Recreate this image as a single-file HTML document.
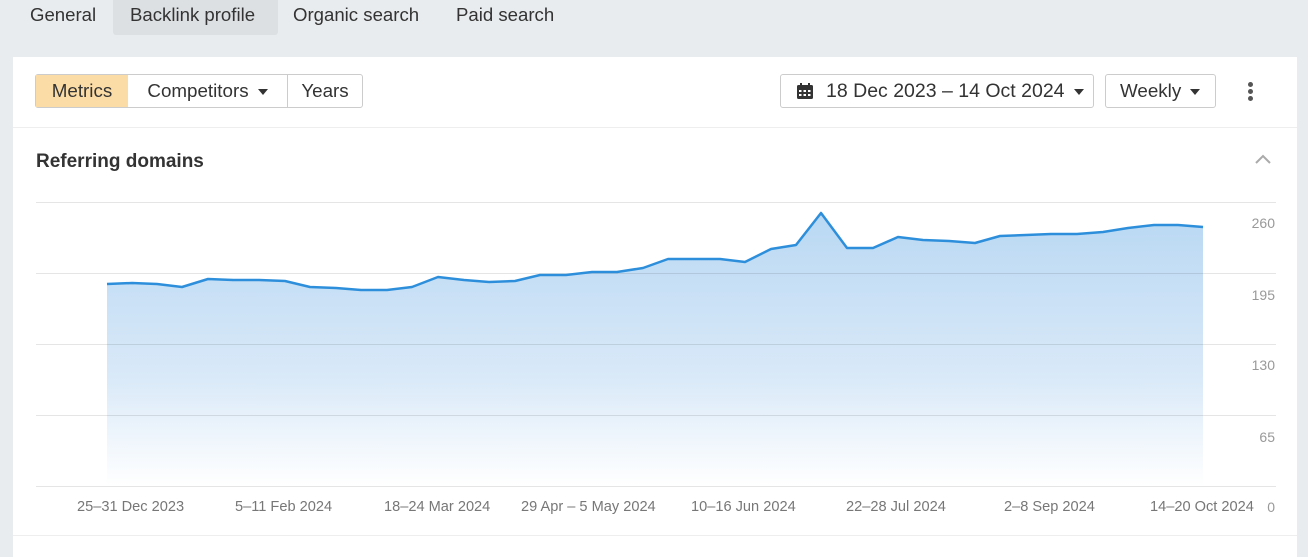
<!DOCTYPE html>
<html><head><style>
body{margin:0;width:1308px;height:552px;background:#e9ecee;font-family:"Liberation Sans",sans-serif;position:relative;overflow:hidden;color:#333}
.tab{position:absolute;top:0;height:34px;line-height:30px;font-size:18.6px;color:#333}
.card{position:absolute;left:13px;top:57px;width:1284px;height:500px;background:#fff}
.btn{position:absolute;top:74px;height:34px;border:1px solid #ccc;box-sizing:border-box;border-radius:3px;font-size:18.8px;line-height:32px;color:#333;background:#fff;white-space:nowrap}
.tri{display:inline-block;width:0;height:0;border-left:5px solid transparent;border-right:5px solid transparent;border-top:6px solid #333;vertical-align:middle;margin-left:9px}
.yl{position:absolute;font-size:14px;color:#999;right:33px}
.xl{position:absolute;top:499px;font-size:14.6px;color:#777;white-space:nowrap}
</style></head><body>
<div class="tab" style="left:30px">General</div>
<div class="tab" style="left:113px;width:165px;height:35px;background:#dde0e3;border-radius:0 0 3px 3px"><span style="margin-left:17px">Backlink profile</span></div>
<div class="tab" style="left:293px">Organic search</div>
<div class="tab" style="left:456px">Paid search</div>
<div class="card"></div>
<div class="btn" style="left:35px;width:328px;padding:0"></div>
<div style="position:absolute;left:36px;top:75px;width:92px;height:32px;background:#fcdca6;font-size:18.8px;line-height:32px;text-align:center">Metrics</div>
<div style="position:absolute;left:128px;top:75px;width:159px;height:32px;border-right:1px solid #ccc;font-size:18.8px;line-height:32px;text-align:center;white-space:nowrap">Competitors<span class="tri"></span></div>
<div style="position:absolute;left:288px;top:75px;width:74px;height:32px;font-size:18.8px;line-height:32px;text-align:center">Years</div>
<div class="btn" style="left:780px;width:314px;padding-left:45px;font-size:19.5px">18 Dec 2023 – 14 Oct 2024<span class="tri"></span></div>
<svg style="position:absolute;left:796px;top:83px" width="18" height="17" viewBox="0 0 18 17"><rect x="1" y="2" width="16" height="14" rx="1.5" fill="#333"/><rect x="4" y="0" width="2" height="4" fill="#333"/><rect x="12" y="0" width="2" height="4" fill="#333"/><g fill="#fff"><rect x="3" y="7" width="2.5" height="2"/><rect x="7.5" y="7" width="2.5" height="2"/><rect x="12" y="7" width="2.5" height="2"/><rect x="3" y="11" width="2.5" height="2"/><rect x="7.5" y="11" width="2.5" height="2"/><rect x="12" y="11" width="2.5" height="2"/></g></svg>
<div class="btn" style="left:1105px;width:111px;padding-left:14px">Weekly<span class="tri"></span></div>
<div style="position:absolute;left:1248px;top:82px;width:5px">
<div style="width:5px;height:5px;border-radius:50%;background:#555;margin-bottom:2px"></div><div style="width:5px;height:5px;border-radius:50%;background:#555;margin-bottom:2px"></div><div style="width:5px;height:5px;border-radius:50%;background:#555"></div></div>
<div style="position:absolute;left:13px;top:127px;width:1284px;height:1px;background:#eee"></div>
<div style="position:absolute;left:36px;top:151px;font-size:19px;font-weight:bold;color:#333">Referring domains</div>
<svg style="position:absolute;left:1254px;top:153px" width="18" height="12"><path d="M2 10 L9 3 L16 10" fill="none" stroke="#aaa" stroke-width="2"/></svg>
<svg style="position:absolute;left:0;top:0" width="1308" height="552">
<defs><linearGradient id="g" x1="0" y1="0" x2="0" y2="1"><stop offset="0" stop-color="#b9d8f3"/><stop offset="0.6" stop-color="#d9e9f8"/><stop offset="1" stop-color="#fff"/></linearGradient></defs>
<path d="M107,284 L132,283 157,284 182,287 208,279 233,280 259,280 285,281 310,287 336,288 361,290 387,290 412,287 438,277 464,280 489,282 515,281 540,275 566,275 592,272 617,272 643,268 668,259 694,259 720,259 745,262 771,249 796,245 821,213 847,248 873,248 898,237 923,240 949,241 975,243 1000,236 1026,235 1051,234 1077,234 1103,232 1128,228 1154,225 1178,225 1203,227 L1203,486 L107,486 Z" fill="url(#g)"/>
<g stroke="#000" stroke-opacity="0.1" stroke-width="1"><line x1="36" y1="202.5" x2="1276" y2="202.5"/><line x1="36" y1="273.5" x2="1276" y2="273.5"/><line x1="36" y1="344.5" x2="1276" y2="344.5"/><line x1="36" y1="415.5" x2="1276" y2="415.5"/><line x1="36" y1="486.5" x2="1276" y2="486.5"/></g>
<path d="M107,284 L132,283 157,284 182,287 208,279 233,280 259,280 285,281 310,287 336,288 361,290 387,290 412,287 438,277 464,280 489,282 515,281 540,275 566,275 592,272 617,272 643,268 668,259 694,259 720,259 745,262 771,249 796,245 821,213 847,248 873,248 898,237 923,240 949,241 975,243 1000,236 1026,235 1051,234 1077,234 1103,232 1128,228 1154,225 1178,225 1203,227" fill="none" stroke="#2d8fdb" stroke-width="2.5" stroke-linejoin="round"/>
</svg>
<div class="yl" style="top:215px">260</div>
<div class="yl" style="top:287px">195</div>
<div class="yl" style="top:357px">130</div>
<div class="yl" style="top:429px">65</div>
<div class="yl" style="top:499px;right:33px">0</div>
<div class="xl" style="left:77px">25–31 Dec 2023</div>
<div class="xl" style="left:235px">5–11 Feb 2024</div>
<div class="xl" style="left:384px">18–24 Mar 2024</div>
<div class="xl" style="left:521px">29 Apr – 5 May 2024</div>
<div class="xl" style="left:691px">10–16 Jun 2024</div>
<div class="xl" style="left:846px">22–28 Jul 2024</div>
<div class="xl" style="left:1004px">2–8 Sep 2024</div>
<div class="xl" style="left:1150px">14–20 Oct 2024</div>
<div style="position:absolute;left:13px;top:535px;width:1284px;height:1px;background:#eee"></div>
</body></html>
